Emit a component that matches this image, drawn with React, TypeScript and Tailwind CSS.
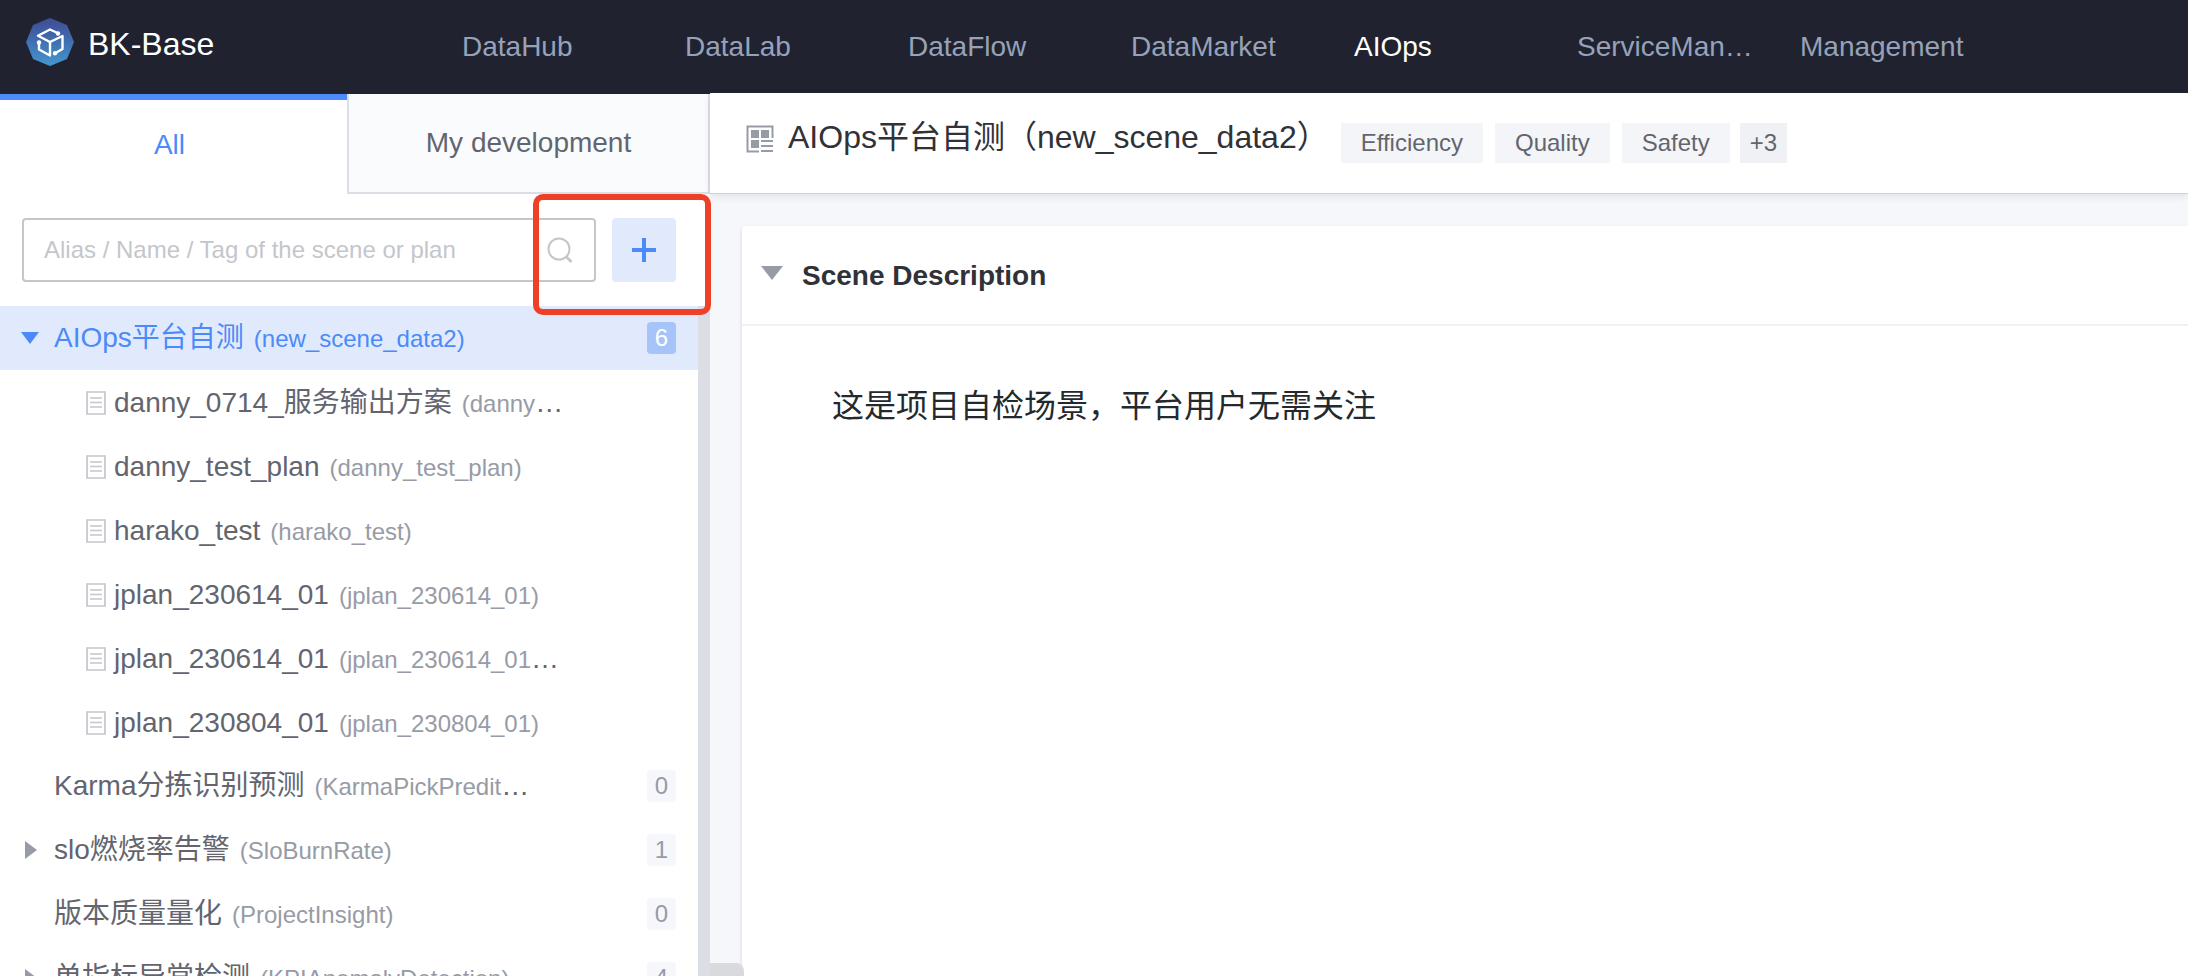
import React from "react";

type TreeItem = { name: string; code: string; cut?: boolean };
type Scene = TreeItem & { count: number; open?: boolean; plans?: TreeItem[] };

const navItems = ["DataHub", "DataLab", "DataFlow", "DataMarket", "AIOps", "ServiceMan…", "Management"];
const tags = ["Efficiency", "Quality", "Safety"];

const scenes: Scene[] = [
  {
    name: "AIOps平台自测",
    code: "(new_scene_data2)",
    count: 6,
    open: true,
    plans: [
      { name: "danny_0714_服务输出方案", code: "(danny", cut: true },
      { name: "danny_test_plan", code: "(danny_test_plan)" },
      { name: "harako_test", code: "(harako_test)" },
      { name: "jplan_230614_01", code: "(jplan_230614_01)" },
      { name: "jplan_230614_01", code: "(jplan_230614_01", cut: true },
      { name: "jplan_230804_01", code: "(jplan_230804_01)" },
    ],
  },
  { name: "Karma分拣识别预测", code: "(KarmaPickPredit", cut: true, count: 0 },
  { name: "slo燃烧率告警", code: "(SloBurnRate)", count: 1 },
  { name: "版本质量量化", code: "(ProjectInsight)", count: 0 },
  { name: "单指标异常检测", code: "(KPIAnomalyDetection)", count: 4 },
];

function Logo() {
  return (
    <svg className="size-12" viewBox="0 0 48 48" fill="none" aria-hidden="true">
      <defs>
        <linearGradient id="logo" x1="0" y1="0" x2="0" y2="1">
          <stop offset="0.1" stopColor="#3f5199" />
          <stop offset="1" stopColor="#4397cf" />
        </linearGradient>
      </defs>
      <path d="M24 0 41 7 48 24 41 41 24 48 7 41 0 24 7 7Z" fill="url(#logo)" />
      <g stroke="#fff" strokeWidth="2.4" strokeLinejoin="round" strokeLinecap="round">
        <path d="M31.5 15 24 11.5 12 17.8 24 24 36.500 18V31L29.500 35" />
        <path d="M24 24V37.500L13 31.500V24.500" />
      </g>
      <circle cx="32" cy="15.500" r="2.200" fill="#fff" />
      <circle cx="13" cy="24.500" r="2.200" fill="#fff" />
      <circle cx="29" cy="35.300" r="2.200" fill="#fff" />
    </svg>
  );
}

function PlanIcon() {
  return (
    <svg className="h-6 w-5 shrink-0" viewBox="0 0 20 24" fill="none" stroke="#c4c6cc" strokeWidth="1.700" aria-hidden="true">
      <path d="M1 1H19V23H1ZM4 7H16M4 11.500H16M4 16H16" />
    </svg>
  );
}

function Label({ item, active }: { item: TreeItem; active?: boolean }) {
  return (
    <span className="flex items-baseline whitespace-nowrap">
      <span>{item.name}</span>
      <span className={active ? "ml-[10px] text-2xl" : "ml-[10px] text-2xl text-[#979ba5]"}>{item.code}</span>
      {item.cut && <span>…</span>}
    </span>
  );
}

function SceneRow({ scene }: { scene: Scene }) {
  const active = !!scene.open;
  return (
    <li>
      <button
        type="button"
        className={
          active
            ? "flex h-16 w-full items-center bg-[#e1eafc] pr-[22px] pl-5 text-left text-[#4b8af8]"
            : "flex h-16 w-full items-center pr-[22px] pl-5 text-left"
        }
      >
        <span className="w-[34px] shrink-0">
          {active && (
            <svg className="h-3 w-5" viewBox="0 0 20 12" aria-hidden="true">
              <path d="M1 0H19L10 12Z" fill="#4b8af8" />
            </svg>
          )}
          {!active && scene.count > 0 && (
            <svg className="ml-[5px] h-[18px] w-3" viewBox="0 0 12 18" aria-hidden="true">
              <path d="M0 0V18L12 9Z" fill="#979ba5" />
            </svg>
          )}
        </span>
        <Label item={scene} active={active} />
        <span
          className={
            active
              ? "ml-auto h-8 w-[29px] rounded bg-[#a6c4f9] text-center text-2xl text-white"
              : "ml-auto h-8 w-[29px] rounded bg-[#f5f7fa] text-center text-2xl text-[#979ba5]"
          }
        >
          {scene.count}
        </span>
      </button>
      {scene.plans && (
        <ul>
          {scene.plans.map((plan, i) => (
            <li key={i}>
              <button type="button" className="flex h-16 w-full items-center gap-2 pt-[2px] pl-[86px] text-left">
                <PlanIcon />
                <Label item={plan} />
              </button>
            </li>
          ))}
        </ul>
      )}
    </li>
  );
}

export default function App() {
  return (
    <div className="flex h-screen flex-col overflow-hidden bg-[#f5f7fa] font-['Liberation_Sans','Noto_Sans_CJK_SC',sans-serif] text-[28px] leading-8 text-[#63656e]">
      <header className="flex h-[93px] shrink-0 items-center bg-[#212230] pl-[26px]">
        <a href="#home" className="flex w-[436px] shrink-0 items-center gap-[14px] pb-[9px] text-[32px] text-white">
          <Logo />
          <span className="pt-1">BK-Base</span>
        </a>
        <nav className="flex">
          {navItems.map((item) => (
            <a
              key={item}
              href={"#" + item}
              className={item === "AIOps" ? "w-[223px] shrink-0 whitespace-nowrap text-white" : "w-[223px] shrink-0 whitespace-nowrap text-[#96a2b9]"}
            >
              {item}
            </a>
          ))}
        </nav>
      </header>

      <div className="flex min-h-0 flex-1">
        <aside className="relative flex w-[710px] shrink-0 flex-col border-t border-[#212230] bg-white">
          <div className="flex h-[100px] shrink-0">
            <button type="button" className="w-[347px] border-t-[6px] border-[#4b8af8] pr-2 pb-1 text-[#4b8af8]">
              All
            </button>
            <button type="button" className="flex-1 border-r-2 border-b-2 border-l-2 border-[#dcdee5] bg-[#fafbfd]">
              My development
            </button>
          </div>
          <div className="flex shrink-0 gap-4 py-6 pr-[34px] pl-[22px]">
            <label className="flex h-16 flex-1 items-center rounded border-2 border-[#c4c6cc] pr-[21px] pl-5">
              <input
                type="text"
                aria-label="Search scenes and plans"
                placeholder="Alias / Name / Tag of the scene or plan"
                className="min-w-0 flex-1 text-2xl outline-none placeholder:text-[#c4c6cc]"
              />
              <svg className="size-[26px]" viewBox="0 0 26 26" fill="none" stroke="#c4c6cc" strokeWidth="2" aria-hidden="true">
                <circle cx="12" cy="12" r="10.500" />
                <path d="M19 19.500 24.500 25" strokeWidth="2.800" />
              </svg>
            </label>
            <button type="button" aria-label="Add" className="flex size-16 items-center justify-center rounded bg-[#e1eafc]">
              <svg className="size-6" viewBox="0 0 24 24" stroke="#4b8af8" strokeWidth="4" aria-hidden="true">
                <path d="M12 0V24M0 12H24" />
              </svg>
            </button>
          </div>
          <div className="flex min-h-0 flex-1">
            <ul className="min-w-0 flex-1 overflow-hidden">
              {scenes.map((scene) => (
                <SceneRow key={scene.name} scene={scene} />
              ))}
            </ul>
            <div className="w-3 bg-[#dcdee5]" />
          </div>
          <div className="pointer-events-none absolute top-[100px] -right-px z-20 h-[121px] w-[178px] rounded-[10px] border-[6px] border-[#ee4026]" />
        </aside>

        <main className="relative flex min-w-0 flex-1 flex-col">
          <div className="z-10 flex h-[101px] shrink-0 items-center border-b border-[#cdd0d6] bg-white pl-[36px] shadow-[0_3px_8px_rgba(0,0,0,0.08)]">
            <svg className="mb-2 size-7" viewBox="0 0 28 28" fill="none" aria-hidden="true">
              <path d="M13 26.500H1.500V1.500H26.500V13" stroke="#979ba5" strokeWidth="2" />
              <path d="M5 5H13V13H5ZM15 5H23V13H15ZM5 15H13V23H5ZM15 15H27V17H15ZM15 20H27V22H15ZM15 25H27V27H15Z" fill="#979ba5" />
            </svg>
            <h1 className="ml-[14px] pb-3 text-[32px] whitespace-nowrap text-[#313238]">AIOps平台自测（new_scene_data2）</h1>
            <ul className="ml-3 flex gap-3 text-2xl leading-10">
              {tags.map((tag) => (
                <li key={tag} className="bg-[#f4f5f8] px-5">
                  {tag}
                </li>
              ))}
              <li className="-ml-[2px] bg-[#f0f1f5] px-[10px]">+3</li>
            </ul>
          </div>
          <section className="mt-8 ml-8 flex-1 rounded-tl bg-white shadow-[0_2px_4px_rgba(0,0,0,0.14)]">
            <button type="button" className="flex h-[100px] w-full items-center border-b-2 border-[#f0f1f5] pl-[19px] text-left font-bold text-[#313238]">
              <svg className="mb-1 h-[14px] w-[22px]" viewBox="0 0 22 14" aria-hidden="true">
                <path d="M0 0H22L11 14Z" fill="#979ba5" />
              </svg>
              <span className="ml-[19px] pt-[2px]">Scene Description</span>
            </button>
            <p className="px-[90px] pt-16 text-[32px] text-[#24292e]">这是项目自检场景，平台用户无需关注</p>
          </section>
          <div className="absolute bottom-0 left-0 h-[13px] w-[34px] rounded-tr-lg bg-[#d8dade]" />
        </main>
      </div>
    </div>
  );
}
